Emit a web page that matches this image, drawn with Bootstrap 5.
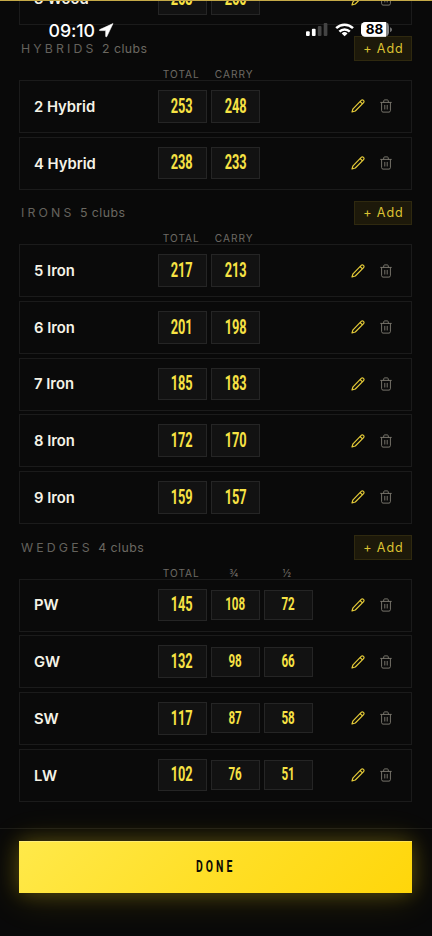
<!DOCTYPE html>
<html lang="en">
<head>
<meta charset="utf-8">
<meta name="viewport" content="width=device-width, initial-scale=1">
<title>Club distances</title>
<link href="https://cdn.jsdelivr.net/npm/bootstrap@5.3.0/dist/css/bootstrap.min.css" rel="stylesheet">
<style>
  body{background:#090909;color:#f5f3e7;font-family:Inter,"Liberation Sans",sans-serif;height:936px;overflow:hidden}
  .screen{height:936px;overflow:hidden;border-top:1px solid #c5aa48}
  .clubs{height:827.4px;overflow:hidden;padding:0 19.6px 0 19px}
  .clubs-scroll{margin-top:-28.7px}
  .group-head{height:24.8px;margin-top:11px;padding-left:2px}
  .group-name,.group-count{padding-top:1px}
  .group-name{font-size:12.3px;letter-spacing:3.15px;color:#64625d}
  .group-count{font-size:12.3px;letter-spacing:.45px;color:#6b6861;margin-left:5.5px}
  .add-btn{width:58px;height:24.8px;background:#1d190a;border:1px solid #2f290f;border-radius:0;color:#dcc233;font-size:12.6px;letter-spacing:.85px;padding:1px 0 0;line-height:1}
  .add-btn:hover{background:#1d190a;color:#dcc233}
  .col-heads{height:18.8px;padding-left:137.6px;gap:3.7px;font-size:10.1px;letter-spacing:1px;color:#6d6a64;line-height:26px}
  .col-heads span{width:49.3px;text-align:center}
  .club-stack{gap:3.7px}
  .club{height:53px;border:1px solid #1b1b1b;background:#0a0a0a;padding:0 14px 0 14px}
  .club-name{width:123.5px;font-size:14.8px;font-weight:600;letter-spacing:0;padding-top:1px}
  .yards{gap:3.9px}
  .yard{width:49.3px;height:32.6px;background:#121212;border:1px solid #252525;color:#f7e244;font:700 19.4px/1 Roboto,"Liberation Sans",sans-serif}
  .yard span{display:inline-block;transform:scaleX(.66)}
  .yard.part{height:30px;font-size:17.6px}
  .acts{gap:14px;margin-right:4px}
  .acts svg{display:block;fill:none;stroke-linecap:round;stroke-linejoin:round}
  .pen{width:14px;height:14px;stroke:#e5cb38;stroke-width:1.2}
  .bin{width:14px;height:14px;stroke:#76736a;stroke-width:1}
  .foot{height:107.6px;border-top:1px solid #1b1b19;padding:11.4px 19.6px 0 19px;position:relative}
  .done-btn{height:52px;border:0;border-radius:0;background:linear-gradient(135deg,#ffe94a 0%,#ffdf27 50%,#ffd60a 100%);box-shadow:0 0 20px rgba(255,220,20,.24),0 4px 38px rgba(255,220,20,.16),inset 0 1px 0 rgba(255,255,255,.28);color:#0b0a05;font:700 17.4px/1 Roboto,"Liberation Sans",sans-serif;padding:0}
  .done-btn span{display:inline-block;transform:scaleX(.6);letter-spacing:5px;margin-right:0}
  .status{position:absolute;left:0;top:0;width:432px;height:60px;z-index:5;color:#fff;pointer-events:none}
  .clock{position:absolute;left:48.5px;top:19.5px;font-size:17.8px;line-height:21px;font-weight:500;letter-spacing:-.1px}
  .status svg{position:absolute;left:0;top:0}
  .charge{position:absolute;left:361px;width:27px;text-align:center;top:22px;font-size:13.5px;line-height:15px;font-weight:700;color:#000}
</style>
</head>
<body>
<svg class="d-none">
  <symbol id="pen" viewBox="0 0 14 14"><path d="M1 13 2 9.8 10.2 1.4C10.8.8 11.8.8 12.5 1.4s.7 1.7.1 2.3L4.3 12ZM9.1 2.5l2.3 2.3"/></symbol>
  <symbol id="bin" viewBox="0 0 14 14"><path d="M1.7 3.4h10.6M4.7 3.3V1.9c0-.6.4-1 1-1h2.6c.6 0 1 .4 1 1v1.4M2.6 3.5v8.2c0 .8.6 1.4 1.4 1.4h6c.8 0 1.4-.6 1.4-1.4V3.5M5.8 6.3v3.8M8.2 6.3v3.8"/></symbol>
</svg>
<div class="screen d-flex flex-column">
  <main class="clubs">
    <div class="clubs-scroll">
      <div class="club d-flex align-items-center"><div class="club-name">3 Wood</div><div class="yards d-flex"><div class="yard d-flex align-items-center justify-content-center"><span>263</span></div><div class="yard d-flex align-items-center justify-content-center"><span>260</span></div></div><div class="acts d-flex ms-auto"><svg class="pen"><use href="#pen"/></svg><svg class="bin"><use href="#bin"/></svg></div></div>

      <section>
        <div class="group-head d-flex align-items-center"><span class="group-name">HYBRIDS</span><span class="group-count">2 clubs</span><button class="btn add-btn ms-auto">+ Add</button></div>
        <div class="col-heads d-flex"><span>TOTAL</span><span>CARRY</span></div>
        <div class="club-stack d-flex flex-column">
          <div class="club d-flex align-items-center"><div class="club-name">2 Hybrid</div><div class="yards d-flex"><div class="yard d-flex align-items-center justify-content-center"><span>253</span></div><div class="yard d-flex align-items-center justify-content-center"><span>248</span></div></div><div class="acts d-flex ms-auto"><svg class="pen"><use href="#pen"/></svg><svg class="bin"><use href="#bin"/></svg></div></div>
          <div class="club d-flex align-items-center"><div class="club-name">4 Hybrid</div><div class="yards d-flex"><div class="yard d-flex align-items-center justify-content-center"><span>238</span></div><div class="yard d-flex align-items-center justify-content-center"><span>233</span></div></div><div class="acts d-flex ms-auto"><svg class="pen"><use href="#pen"/></svg><svg class="bin"><use href="#bin"/></svg></div></div>
        </div>
      </section>

      <section>
        <div class="group-head d-flex align-items-center"><span class="group-name">IRONS</span><span class="group-count">5 clubs</span><button class="btn add-btn ms-auto">+ Add</button></div>
        <div class="col-heads d-flex"><span>TOTAL</span><span>CARRY</span></div>
        <div class="club-stack d-flex flex-column">
          <div class="club d-flex align-items-center"><div class="club-name">5 Iron</div><div class="yards d-flex"><div class="yard d-flex align-items-center justify-content-center"><span>217</span></div><div class="yard d-flex align-items-center justify-content-center"><span>213</span></div></div><div class="acts d-flex ms-auto"><svg class="pen"><use href="#pen"/></svg><svg class="bin"><use href="#bin"/></svg></div></div>
          <div class="club d-flex align-items-center"><div class="club-name">6 Iron</div><div class="yards d-flex"><div class="yard d-flex align-items-center justify-content-center"><span>201</span></div><div class="yard d-flex align-items-center justify-content-center"><span>198</span></div></div><div class="acts d-flex ms-auto"><svg class="pen"><use href="#pen"/></svg><svg class="bin"><use href="#bin"/></svg></div></div>
          <div class="club d-flex align-items-center"><div class="club-name">7 Iron</div><div class="yards d-flex"><div class="yard d-flex align-items-center justify-content-center"><span>185</span></div><div class="yard d-flex align-items-center justify-content-center"><span>183</span></div></div><div class="acts d-flex ms-auto"><svg class="pen"><use href="#pen"/></svg><svg class="bin"><use href="#bin"/></svg></div></div>
          <div class="club d-flex align-items-center"><div class="club-name">8 Iron</div><div class="yards d-flex"><div class="yard d-flex align-items-center justify-content-center"><span>172</span></div><div class="yard d-flex align-items-center justify-content-center"><span>170</span></div></div><div class="acts d-flex ms-auto"><svg class="pen"><use href="#pen"/></svg><svg class="bin"><use href="#bin"/></svg></div></div>
          <div class="club d-flex align-items-center"><div class="club-name">9 Iron</div><div class="yards d-flex"><div class="yard d-flex align-items-center justify-content-center"><span>159</span></div><div class="yard d-flex align-items-center justify-content-center"><span>157</span></div></div><div class="acts d-flex ms-auto"><svg class="pen"><use href="#pen"/></svg><svg class="bin"><use href="#bin"/></svg></div></div>
        </div>
      </section>

      <section>
        <div class="group-head d-flex align-items-center"><span class="group-name">WEDGES</span><span class="group-count">4 clubs</span><button class="btn add-btn ms-auto">+ Add</button></div>
        <div class="col-heads d-flex"><span>TOTAL</span><span>¾</span><span>½</span></div>
        <div class="club-stack d-flex flex-column">
          <div class="club d-flex align-items-center"><div class="club-name">PW</div><div class="yards d-flex align-items-center"><div class="yard d-flex align-items-center justify-content-center"><span>145</span></div><div class="yard part d-flex align-items-center justify-content-center"><span>108</span></div><div class="yard part d-flex align-items-center justify-content-center"><span>72</span></div></div><div class="acts d-flex ms-auto"><svg class="pen"><use href="#pen"/></svg><svg class="bin"><use href="#bin"/></svg></div></div>
          <div class="club d-flex align-items-center"><div class="club-name">GW</div><div class="yards d-flex align-items-center"><div class="yard d-flex align-items-center justify-content-center"><span>132</span></div><div class="yard part d-flex align-items-center justify-content-center"><span>98</span></div><div class="yard part d-flex align-items-center justify-content-center"><span>66</span></div></div><div class="acts d-flex ms-auto"><svg class="pen"><use href="#pen"/></svg><svg class="bin"><use href="#bin"/></svg></div></div>
          <div class="club d-flex align-items-center"><div class="club-name">SW</div><div class="yards d-flex align-items-center"><div class="yard d-flex align-items-center justify-content-center"><span>117</span></div><div class="yard part d-flex align-items-center justify-content-center"><span>87</span></div><div class="yard part d-flex align-items-center justify-content-center"><span>58</span></div></div><div class="acts d-flex ms-auto"><svg class="pen"><use href="#pen"/></svg><svg class="bin"><use href="#bin"/></svg></div></div>
          <div class="club d-flex align-items-center"><div class="club-name">LW</div><div class="yards d-flex align-items-center"><div class="yard d-flex align-items-center justify-content-center"><span>102</span></div><div class="yard part d-flex align-items-center justify-content-center"><span>76</span></div><div class="yard part d-flex align-items-center justify-content-center"><span>51</span></div></div><div class="acts d-flex ms-auto"><svg class="pen"><use href="#pen"/></svg><svg class="bin"><use href="#bin"/></svg></div></div>
        </div>
      </section>
    </div>
  </main>
  <footer class="foot"><button class="btn done-btn w-100"><span>DONE</span></button></footer>
</div>

<!-- device status bar, floating over the scrolled list -->
<div class="status">
  <div class="clock">09:10</div>
  <svg width="432" height="60" viewBox="0 0 432 60">
    <path d="M113 23.6 99.8 29.6c-.6.3-.5 1 .2 1h5.7v5.7c0 .7.8.8 1.1.2Z" fill="#fff" stroke="#fff" stroke-width=".6" stroke-linejoin="round"/>
    <rect x="306" y="31.3" width="3.7" height="4.7" rx="1" fill="#fff"/>
    <rect x="311.9" y="28.8" width="3.7" height="7.2" rx="1" fill="#fff"/>
    <rect x="317.8" y="26" width="3.7" height="10" rx="1" fill="#444"/>
    <rect x="323.7" y="23" width="3.7" height="13" rx="1" fill="#444"/>
    <g fill="none" stroke="#fff" stroke-width="2.5"><path d="M336.2 28.2a12 12 0 0 1 16.8 0"/><path d="M339.4 31.7a7.3 7.3 0 0 1 10.4 0"/></g>
    <path d="M344.6 36.3l-2.9-2.9a4.1 4.1 0 0 1 5.8 0Z" fill="#fff"/>
    <rect x="361" y="22" width="28" height="14.8" rx="4.6" fill="#858585"/>
    <path d="M365.6 22H386v14.8h-20.4a4.6 4.6 0 0 1-4.6-4.6v-5.6a4.6 4.6 0 0 1 4.6-4.6Z" fill="#fff"/>
    <path d="M390.2 27.2c2.2.7 2.2 4.1 0 4.8Z" fill="#858585"/>
  </svg>
  <div class="charge">88</div>
</div>
<script src="https://cdn.jsdelivr.net/npm/bootstrap@5.3.0/dist/js/bootstrap.bundle.min.js"></script>
</body>
</html>
